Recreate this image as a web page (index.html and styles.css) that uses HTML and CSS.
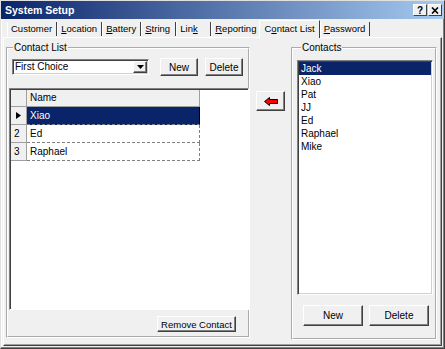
FILE: index.html
```html
<!DOCTYPE html>
<html lang="en">
<head>
    <meta charset="UTF-8">
    <title>System Setup</title>
    <link rel="stylesheet" href="styles.css">
</head>
<body>
    <div class="window">
        <div class="titlebar">
            <span class="title">System Setup</span>
            <div class="title-buttons">
                <span class="tbtn">?</span>
                <span class="tbtn">
                    <svg width="8" height="7" viewBox="0 0 8 7"><path d="M1 0.5 L7 6.5 M7 0.5 L1 6.5" stroke="#000" stroke-width="1.6"/></svg>
                </span>
            </div>
        </div>

        <div class="tabs">
            <span class="tab">Customer</span>
            <span class="tab"><u>L</u>ocation</span>
            <span class="tab"><u>B</u>attery</span>
            <span class="tab"><u>S</u>tring</span>
            <span class="tab">Lin<u>k</u></span>
            <span class="tab"><u>R</u>eporting</span>
            <span class="tab active">C<u>o</u>ntact List</span>
            <span class="tab"><u>P</u>assword</span>
        </div>

        <div class="panel">
            <fieldset class="group group-list">
                <legend>Contact List</legend>
                <div class="toolbar">
                    <div class="combo">
                        <span class="combo-text">First Choice</span>
                        <span class="combo-btn">
                            <svg width="7" height="4" viewBox="0 0 7 4"><path d="M0 0 H7 L3.5 4 Z" fill="#000"/></svg>
                        </span>
                    </div>
                    <button class="btn btn-new">New</button>
                    <button class="btn btn-delete">Delete</button>
                </div>

                <div class="grid">
                    <table class="grid-table">
                        <tr class="head">
                            <td class="ind"></td>
                            <td class="name">Name</td>
                        </tr>
                        <tr class="sel">
                            <td class="ind">
                                <svg width="5" height="7" viewBox="0 0 5 7"><path d="M0 0 L5 3.5 L0 7 Z" fill="#000"/></svg>
                            </td>
                            <td class="name">Xiao</td>
                        </tr>
                        <tr>
                            <td class="ind">2</td>
                            <td class="name">Ed</td>
                        </tr>
                        <tr>
                            <td class="ind">3</td>
                            <td class="name">Raphael</td>
                        </tr>
                    </table>
                </div>

                <div class="footer">
                    <button class="btn btn-remove">Remove Contact</button>
                </div>
            </fieldset>

            <div class="mid">
                <button class="btn btn-arrow">
                    <svg width="14" height="9" viewBox="0 0 14 9"><path d="M0.5 4.5 L5.5 0.5 V2.5 H13.5 V6.5 H5.5 V8.5 Z" fill="#ff0000" stroke="#000" stroke-width="1"/></svg>
                </button>
            </div>

            <fieldset class="group group-contacts">
                <legend>Contacts</legend>
                <ul class="listbox">
                    <li class="selected">Jack</li>
                    <li>Xiao</li>
                    <li>Pat</li>
                    <li>JJ</li>
                    <li>Ed</li>
                    <li>Raphael</li>
                    <li>Mike</li>
                </ul>
                <div class="actions">
                    <button class="btn btn-wide">New</button>
                    <button class="btn btn-wide">Delete</button>
                </div>
            </fieldset>
        </div>
    </div>
</body>
</html>
```

FILE: styles.css
```css
* {
    box-sizing: border-box;
}

body {
    margin: 0;
    font-family: "Liberation Sans", Arial, sans-serif;
    font-size: 10px;
    color: #000;
    background-color: #f0f0f0;
}

.window {
    width: 445px;
    height: 349px;
    background-color: #f0f0f0;
    border: 1px solid;
    border-color: #e0e0e0 #404040 #404040 #e0e0e0;
    box-shadow: inset -1px -1px #808080, inset 1px 1px #fff;
    display: flex;
    flex-direction: column;
}

/* title bar */
.titlebar {
    height: 18px;
    flex-shrink: 0;
    display: flex;
    align-items: center;
    justify-content: space-between;
    padding: 0 2px 0 4px;
    background: linear-gradient(to right, #0a246a, #a6caf0);
    color: #fff;
}

.title {
    font-weight: bold;
    font-size: 10.5px;
}

.title-buttons {
    display: flex;
    gap: 1px;
}

.tbtn {
    width: 14px;
    height: 12px;
    display: flex;
    align-items: center;
    justify-content: center;
    background-color: #f0f0f0;
    border: 1px solid;
    border-color: #fff #404040 #404040 #fff;
    color: #000;
    font-weight: bold;
    font-size: 10px;
}

/* tabs */
.tabs {
    height: 18px;
    flex-shrink: 0;
    display: flex;
    align-items: flex-end;
    padding-left: 6px;
    font-size: 9.5px;
}

.tab {
    height: 14px;
    line-height: 14px;
    margin-bottom: 1px;
    padding: 0 4px;
    min-width: 35px;
    border-right: 1px solid #404040;
    box-shadow: inset 1px 0 #fff;
    white-space: nowrap;
}

.tab.active {
    position: relative;
    height: 18px;
    line-height: 16px;
    margin: 0 0 -1px -2px;
    padding: 0 4px 0 5px;
    background-color: #f0f0f0;
    border-top: 1px solid #fff;
    box-shadow: inset 1px 0 #fff;
}

/* main panel */
.panel {
    height: 309px;
    width: 439px;
    margin-left: 2px;
    flex-shrink: 0;
    border: 1px solid;
    border-color: #fff #404040 #404040 #fff;
    box-shadow: inset -1px -1px #a0a0a0;
    padding: 4px 0 0 2px;
    display: flex;
    align-items: flex-start;
}

.group {
    margin: 0;
    padding: 4px 0 0 1px;
    border: 2px groove #fff;
    min-width: 0;
}

.group legend {
    margin-left: 4px;
    padding: 0 1px;
    line-height: 12px;
}

.group-list {
    width: 244px;
    height: 296px;
}

.group-contacts {
    width: 146px;
    height: 298px;
    padding: 3px 2px 0 4px;
}

/* buttons */
.btn {
    font: inherit;
    color: #000;
    background-color: #f0f0f0;
    border: 1px solid;
    border-color: #fff #404040 #404040 #fff;
    box-shadow: inset -1px -1px #808080;
    padding: 0;
    white-space: nowrap;
}

/* contact list group */
.toolbar {
    display: flex;
    align-items: center;
    height: 18px;
    margin-left: 3px;
}

.combo {
    width: 137px;
    height: 16px;
    display: flex;
    align-items: center;
    justify-content: space-between;
    background-color: #fff;
    border: 1px solid;
    border-color: #808080 #fff #fff #808080;
    box-shadow: inset 1px 1px #404040, inset -1px -1px #d4d0c8;
    padding: 1px 1px 1px 2px;
}

.combo-text {
    line-height: 12px;
}

.combo-btn {
    width: 14px;
    height: 12px;
    display: flex;
    align-items: center;
    justify-content: center;
    background-color: #f0f0f0;
    border: 1px solid;
    border-color: #fff #404040 #404040 #fff;
    box-shadow: inset -1px -1px #808080;
}

.btn-new {
    width: 38px;
    height: 18px;
    margin-left: 11px;
}

.btn-delete {
    width: 38px;
    height: 18px;
    margin-left: 7px;
}

.grid {
    width: 240px;
    height: 222px;
    margin-top: 12px;
    background-color: #fff;
    border: 1px solid;
    border-color: #808080 #fff #fff #808080;
    box-shadow: inset 1px 1px #404040;
    padding: 1px 0 0 1px;
}

.grid-table {
    border-collapse: separate;
    border-spacing: 0;
}

.grid-table td {
    padding: 0 0 0 3px;
    line-height: 17px;
    white-space: nowrap;
}

.grid-table .ind {
    width: 16px;
    background-color: #f0f0f0;
    border-right: 1px solid #a0a0a0;
    border-bottom: 1px solid #a0a0a0;
}

.grid-table .name {
    width: 173px;
    border-right: 1px dashed #808080;
    border-bottom: 1px dashed #808080;
}

.grid-table .head td {
    line-height: 16px;
    background-color: #f0f0f0;
    border-right: 1px solid #a0a0a0;
    border-bottom: 1px solid #a0a0a0;
}

.grid-table .sel .ind {
    padding-left: 5px;
}

.grid-table .sel .ind svg {
    display: block;
}

.grid-table .sel .name {
    background-color: #0a246a;
    color: #fff;
    border-right: 1px solid #000;
}

.footer {
    display: flex;
    justify-content: flex-end;
    margin-top: 6px;
    padding-right: 12px;
}

.btn-remove {
    width: 79px;
    height: 16px;
    font-size: 9.5px;
}

/* arrow column */
.mid {
    width: 41px;
    padding: 49px 0 0 6px;
}

.btn-arrow {
    width: 29px;
    height: 20px;
    display: flex;
    align-items: center;
    justify-content: center;
}

/* contacts group */
.listbox {
    list-style: none;
    margin: 3px 0 0;
    padding: 1px;
    width: 136px;
    height: 235px;
    background-color: #fff;
    border: 1px solid;
    border-color: #808080 #fff #fff #808080;
    box-shadow: inset 1px 1px #404040, inset -1px -1px #d4d0c8;
}

.listbox li {
    height: 13px;
    line-height: 13px;
    padding-left: 2px;
}

.listbox li.selected {
    background-color: #0a246a;
    color: #fff;
}

.actions {
    display: flex;
    gap: 6px;
    margin-top: 10px;
    padding-left: 6px;
}

.btn-wide {
    width: 60px;
    height: 21px;
}
```
